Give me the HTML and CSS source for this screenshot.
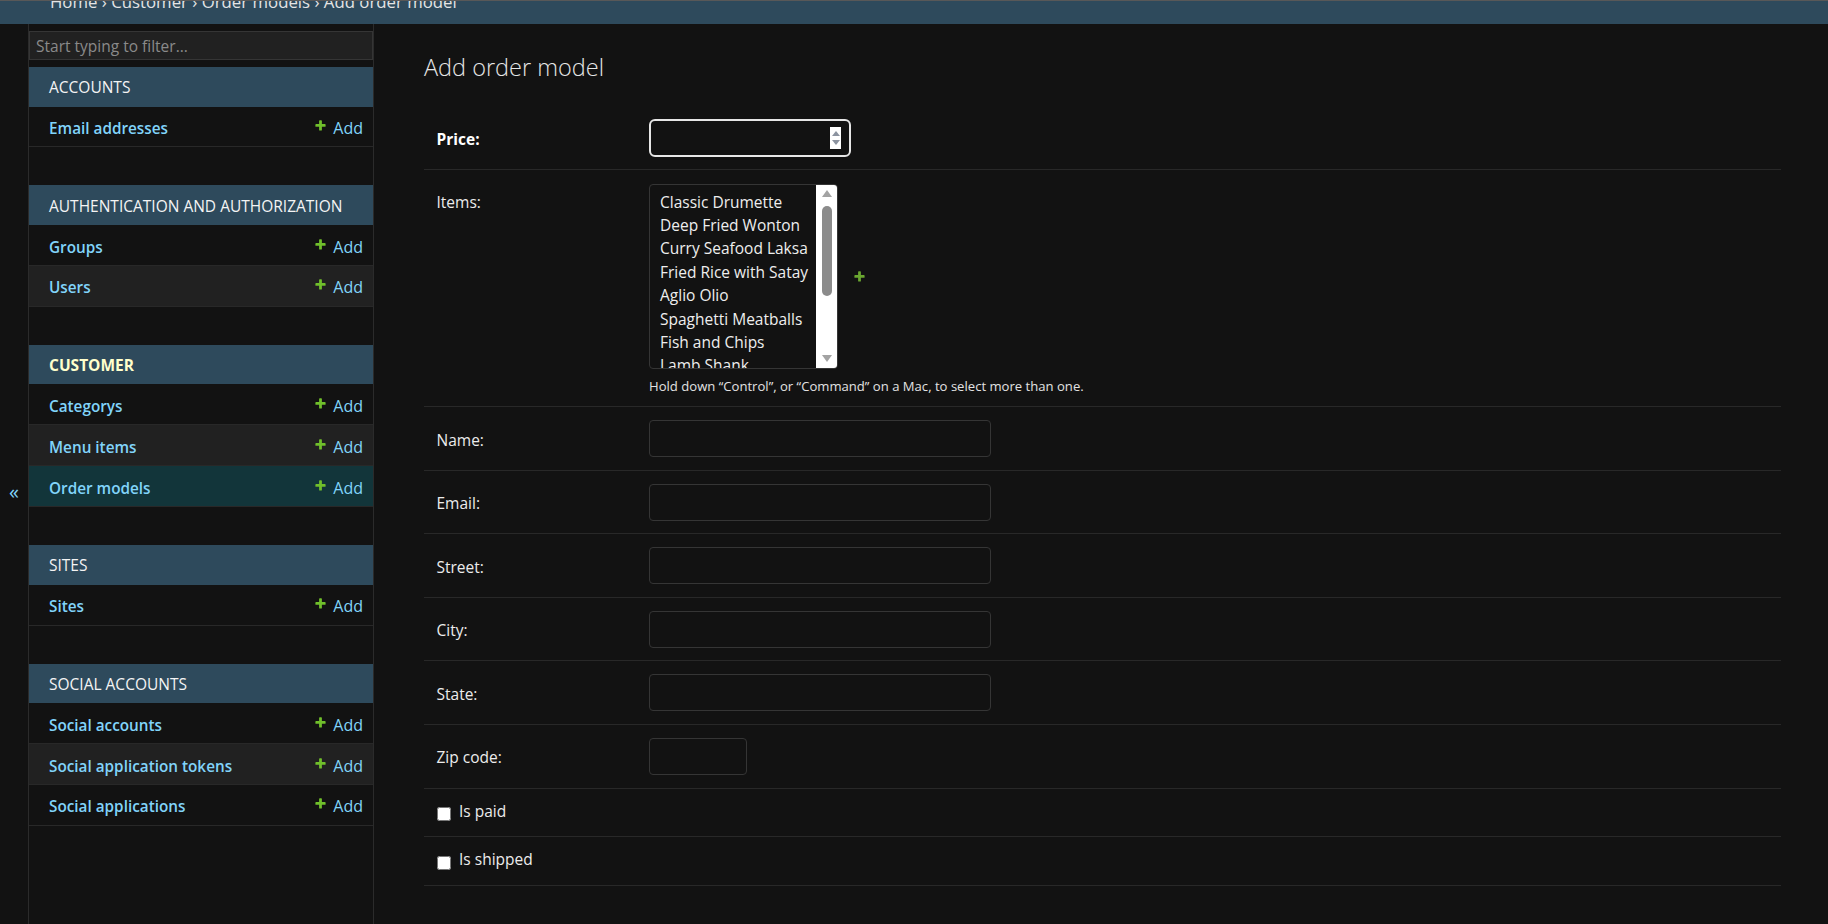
FILE: index.html
```html
<!DOCTYPE html>
<html lang="en">
<head>
<meta charset="utf-8">
<title>Add order model</title>
<link rel="stylesheet" href="styles.css">
</head>
<body>
<div class="header-edge"></div>
<nav class="breadcrumbs"><div class="crumbs">Home › Customer › Order models › Add order model</div></nav>
<div class="layout">
  <div class="toggle"><span>«</span></div>
  <aside class="sidebar">
    <input class="filter" type="text" placeholder="Start typing to filter...">
    <div class="module">
      <div class="caption">Accounts</div>
      <div class="row"><a class="model">Email addresses</a><a class="add"><svg width="13" height="13" viewBox="0 0 1792 1792"><path fill="#70bf2b" d="M1600 796v192q0 40-28 68t-68 28h-416v416q0 40-28 68t-68 28h-192q-40 0-68-28t-28-68v-416h-416q-40 0-68-28t-28-68v-192q0-40 28-68t68-28h416v-416q0-40 28-68t68-28h192q40 0 68 28t28 68v416h416q40 0 68 28t28 68z"/></svg>Add</a></div>
    </div>
    <div class="module">
      <div class="caption">Authentication and Authorization</div>
      <div class="row"><a class="model">Groups</a><a class="add"><svg width="13" height="13" viewBox="0 0 1792 1792"><path fill="#70bf2b" d="M1600 796v192q0 40-28 68t-68 28h-416v416q0 40-28 68t-68 28h-192q-40 0-68-28t-28-68v-416h-416q-40 0-68-28t-28-68v-192q0-40 28-68t68-28h416v-416q0-40 28-68t68-28h192q40 0 68 28t28 68v416h416q40 0 68 28t28 68z"/></svg>Add</a></div>
      <div class="row alt"><a class="model">Users</a><a class="add"><svg width="13" height="13" viewBox="0 0 1792 1792"><path fill="#70bf2b" d="M1600 796v192q0 40-28 68t-68 28h-416v416q0 40-28 68t-68 28h-192q-40 0-68-28t-28-68v-416h-416q-40 0-68-28t-28-68v-192q0-40 28-68t68-28h416v-416q0-40 28-68t68-28h192q40 0 68 28t28 68v416h416q40 0 68 28t28 68z"/></svg>Add</a></div>
    </div>
    <div class="module">
      <div class="caption current">Customer</div>
      <div class="row"><a class="model">Categorys</a><a class="add"><svg width="13" height="13" viewBox="0 0 1792 1792"><path fill="#70bf2b" d="M1600 796v192q0 40-28 68t-68 28h-416v416q0 40-28 68t-68 28h-192q-40 0-68-28t-28-68v-416h-416q-40 0-68-28t-28-68v-192q0-40 28-68t68-28h416v-416q0-40 28-68t68-28h192q40 0 68 28t28 68v416h416q40 0 68 28t28 68z"/></svg>Add</a></div>
      <div class="row alt"><a class="model">Menu items</a><a class="add"><svg width="13" height="13" viewBox="0 0 1792 1792"><path fill="#70bf2b" d="M1600 796v192q0 40-28 68t-68 28h-416v416q0 40-28 68t-68 28h-192q-40 0-68-28t-28-68v-416h-416q-40 0-68-28t-28-68v-192q0-40 28-68t68-28h416v-416q0-40 28-68t68-28h192q40 0 68 28t28 68v416h416q40 0 68 28t28 68z"/></svg>Add</a></div>
      <div class="row selected"><a class="model">Order models</a><a class="add"><svg width="13" height="13" viewBox="0 0 1792 1792"><path fill="#70bf2b" d="M1600 796v192q0 40-28 68t-68 28h-416v416q0 40-28 68t-68 28h-192q-40 0-68-28t-28-68v-416h-416q-40 0-68-28t-28-68v-192q0-40 28-68t68-28h416v-416q0-40 28-68t68-28h192q40 0 68 28t28 68v416h416q40 0 68 28t28 68z"/></svg>Add</a></div>
    </div>
    <div class="module">
      <div class="caption">Sites</div>
      <div class="row"><a class="model">Sites</a><a class="add"><svg width="13" height="13" viewBox="0 0 1792 1792"><path fill="#70bf2b" d="M1600 796v192q0 40-28 68t-68 28h-416v416q0 40-28 68t-68 28h-192q-40 0-68-28t-28-68v-416h-416q-40 0-68-28t-28-68v-192q0-40 28-68t68-28h416v-416q0-40 28-68t68-28h192q40 0 68 28t28 68v416h416q40 0 68 28t28 68z"/></svg>Add</a></div>
    </div>
    <div class="module">
      <div class="caption">Social Accounts</div>
      <div class="row"><a class="model">Social accounts</a><a class="add"><svg width="13" height="13" viewBox="0 0 1792 1792"><path fill="#70bf2b" d="M1600 796v192q0 40-28 68t-68 28h-416v416q0 40-28 68t-68 28h-192q-40 0-68-28t-28-68v-416h-416q-40 0-68-28t-28-68v-192q0-40 28-68t68-28h416v-416q0-40 28-68t68-28h192q40 0 68 28t28 68v416h416q40 0 68 28t28 68z"/></svg>Add</a></div>
      <div class="row alt"><a class="model">Social application tokens</a><a class="add"><svg width="13" height="13" viewBox="0 0 1792 1792"><path fill="#70bf2b" d="M1600 796v192q0 40-28 68t-68 28h-416v416q0 40-28 68t-68 28h-192q-40 0-68-28t-28-68v-416h-416q-40 0-68-28t-28-68v-192q0-40 28-68t68-28h416v-416q0-40 28-68t68-28h192q40 0 68 28t28 68v416h416q40 0 68 28t28 68z"/></svg>Add</a></div>
      <div class="row"><a class="model">Social applications</a><a class="add"><svg width="13" height="13" viewBox="0 0 1792 1792"><path fill="#70bf2b" d="M1600 796v192q0 40-28 68t-68 28h-416v416q0 40-28 68t-68 28h-192q-40 0-68-28t-28-68v-416h-416q-40 0-68-28t-28-68v-192q0-40 28-68t68-28h416v-416q0-40 28-68t68-28h192q40 0 68 28t28 68v416h416q40 0 68 28t28 68z"/></svg>Add</a></div>
    </div>
  </aside>
  <main class="content">
    <h1>Add order model</h1>
    <form class="form">
      <div class="frow price-row">
        <label class="required">Price:</label>
        <div class="num"><span class="spin"><i class="tri up"></i><i class="tri down"></i></span></div>
      </div>
      <div class="frow items-row">
        <label>Items:</label>
        <div class="field">
          <div class="related">
            <div class="select">
              <div class="options">
                <div>Classic Drumette</div>
                <div>Deep Fried Wonton</div>
                <div>Curry Seafood Laksa</div>
                <div>Fried Rice with Satay</div>
                <div>Aglio Olio</div>
                <div>Spaghetti Meatballs</div>
                <div>Fish and Chips</div>
                <div>Lamb Shank</div>
              </div>
              <div class="sbar"><i class="tri up"></i><span class="thumb"></span><i class="tri down"></i></div>
            </div>
            <svg class="rel-add" width="13" height="13" viewBox="0 0 1792 1792"><path fill="#6aa630" d="M1600 796v192q0 40-28 68t-68 28h-416v416q0 40-28 68t-68 28h-192q-40 0-68-28t-28-68v-416h-416q-40 0-68-28t-28-68v-192q0-40 28-68t68-28h416v-416q0-40 28-68t68-28h192q40 0 68 28t28 68v416h416q40 0 68 28t28 68z"/></svg>
          </div>
          <div class="help">Hold down “Control”, or “Command” on a Mac, to select more than one.</div>
        </div>
      </div>
      <div class="frow"><label>Name:</label><input class="text" type="text"></div>
      <div class="frow"><label>Email:</label><input class="text" type="text"></div>
      <div class="frow"><label>Street:</label><input class="text" type="text"></div>
      <div class="frow"><label>City:</label><input class="text" type="text"></div>
      <div class="frow"><label>State:</label><input class="text" type="text"></div>
      <div class="frow"><label>Zip code:</label><input class="text zip" type="text"></div>
      <div class="crow"><input type="checkbox"><span>Is paid</span></div>
      <div class="crow"><input type="checkbox"><span>Is shipped</span></div>
      <div class="submit-edge"></div>
    </form>
  </main>
</div>
</body>
</html>
```
FILE: styles.css
```css
* { box-sizing: border-box; }
html, body { margin: 0; padding: 0; background: #121212; overflow: hidden; }
body { font-family: "Open Sans", "Noto Sans", sans-serif; color: #eeeeee; height: 924px; }

.header-edge { height: 1px; background: #585858; }
.breadcrumbs { height: 23px; background: #2e4a5c; overflow: hidden; padding-left: 50px; }
.crumbs { margin-top: -9px; line-height: 20px; font-size: 16.8px; color: #e4e4e4; white-space: nowrap; }

.layout { display: flex; align-items: stretch; }

.toggle { width: 29px; height: 934px; border-right: 1px solid #2b2b2b; display: flex; align-items: center; justify-content: center; color: #81d4fa; font-size: 20px; }

.sidebar { width: 345px; border-right: 1px solid #2b2b2b; padding-top: 7px; }
.filter { display: block; width: 344px; height: 29px; margin: 0 0 7px 0; padding: 0 6px; background: #212121; border: 1px solid #353535; color: #eeeeee; font-family: "Open Sans", sans-serif; font-size: 15.5px; outline: none; }
.filter::placeholder { color: #8a8a8a; }

.module { margin-bottom: 38px; }
.caption { height: 39.6px; display: flex; align-items: center; padding: 1px 20px 0; background: #2e4a5c; color: #f4f4f4; font-size: 15.5px; text-transform: uppercase; }
.caption.current { color: #ffffcc; font-weight: 700; }

.row { height: 40.9px; display: flex; align-items: center; justify-content: space-between; padding: 3px 10px 0 20px; border-bottom: 1px solid #282828; }
.row.alt { background: #212121; }
.row.selected { background: #12353a; }
.model { color: #81d4fa; font-weight: 600; font-size: 15.3px; line-height: 20px; text-decoration: none; }
.add { display: flex; align-items: center; gap: 6px; color: #81d4fa; font-size: 16px; line-height: 20px; }
.add svg { margin-top: -5px; }

.content { flex: 1; padding: 28px 47px 0 50px; }
h1 { margin: 0 0 24px; font-size: 23.5px; font-weight: 300; line-height: 30px; color: #e6e6e6; }

.frow { display: flex; align-items: flex-start; padding: 13px 0 12.6px 12.5px; border-bottom: 1px solid #282828; }
.frow label { width: 212.5px; flex: none; padding-top: 9.5px; line-height: 20px; font-size: 15.5px; color: #ececec; }
.frow label.required { font-weight: 700; color: #ffffff; padding-top: 10.5px; }

.price-row { padding: 12.5px 0 12.5px 12.5px; }
.num { width: 202px; height: 38px; border: 2px solid #e6e6e6; border-radius: 6px; display: flex; align-items: center; justify-content: flex-end; padding-right: 8px; }
.spin { width: 11px; height: 22px; background: #ffffff; display: flex; flex-direction: column; align-items: center; justify-content: space-between; padding: 4px 0; }
.tri { display: block; width: 0; height: 0; border-left: 4px solid transparent; border-right: 4px solid transparent; }
.tri.up { border-bottom: 5px solid #8c93a0; }
.tri.down { border-top: 5px solid #8c93a0; }

.items-row { padding: 13.5px 0 11.5px 12.5px; }
.items-row label { padding-top: 8.5px; }
.related { display: flex; align-items: center; gap: 15px; }
.select { width: 189px; height: 185px; display: flex; border: 1px solid #353535; border-radius: 4px; overflow: hidden; }
.options { flex: 1; padding: 6px 0 0 10px; font-size: 15.5px; line-height: 23.4px; color: #eeeeee; overflow: hidden; white-space: nowrap; }
.sbar { width: 21px; flex: none; background: #ffffff; display: flex; flex-direction: column; align-items: center; padding: 5px 0 6px; }
.sbar .tri { border-left-width: 5px; border-right-width: 5px; }
.sbar .tri.up { border-bottom: 7px solid #a3a3a3; }
.sbar .tri.down { border-top: 7px solid #a3a3a3; margin-top: auto; }
.thumb { display: block; width: 10px; height: 90px; margin-top: 9px; border-radius: 5px; background: #8b8b8b; }
.help { margin-top: 8px; font-size: 13.1px; line-height: 18px; color: #e2e2e2; }

.text { display: block; width: 342px; height: 37px; background: #121212; border: 1px solid #353535; border-radius: 4px; color: #eeeeee; outline: none; }
.text.zip { width: 97.5px; }

.crow { display: flex; align-items: center; gap: 8.5px; height: 48.5px; padding: 0 0 3px 12.5px; border-bottom: 1px solid #282828; font-size: 15.5px; line-height: 20px; color: #ececec; }
.crow input { width: 14px; height: 14px; margin: 7px 0 0 0; }

.submit-edge { margin-top: 38px; border-top: 1px solid #282828; height: 40px; }
```
